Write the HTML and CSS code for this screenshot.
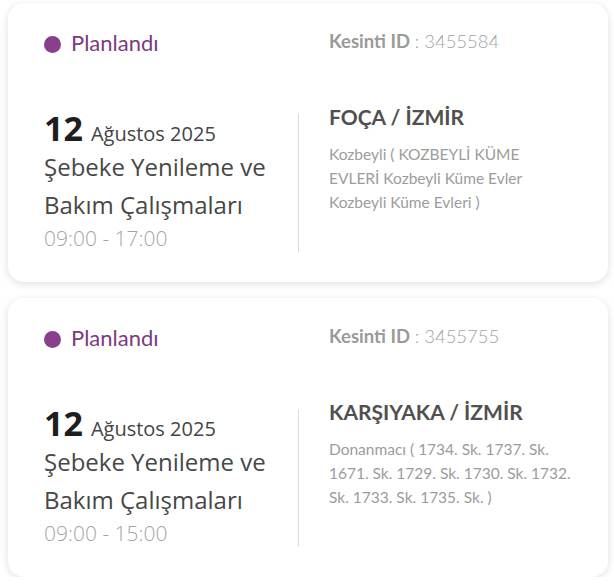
FILE: index.html
```html
<!DOCTYPE html>
<html lang="tr">
<head>
<meta charset="utf-8">
<title>Kesintiler</title>
<link rel="stylesheet" href="styles.css">
</head>
<body>
<div class="list">
  <div class="card">
    <div class="card-top">
      <div class="status"><span class="dot"></span><span class="status-text">Planlandı</span></div>
      <div class="outage-id"><span class="id-label">Kesinti ID</span> <span class="id-value">: 3455584</span></div>
    </div>
    <div class="card-body">
      <div class="info">
        <div class="date"><span class="day">12</span><span class="month">Ağustos 2025</span></div>
        <div class="title">Şebeke Yenileme ve Bakım Çalışmaları</div>
        <div class="time">09:00 - 17:00</div>
      </div>
      <div class="place">
        <div class="city">FOÇA / İZMİR</div>
        <div class="address">Kozbeyli ( KOZBEYLİ KÜME EVLERİ Kozbeyli Küme Evler Kozbeyli Küme Evleri )</div>
      </div>
    </div>
  </div>
  <div class="card">
    <div class="card-top">
      <div class="status"><span class="dot"></span><span class="status-text">Planlandı</span></div>
      <div class="outage-id"><span class="id-label">Kesinti ID</span> <span class="id-value">: 3455755</span></div>
    </div>
    <div class="card-body">
      <div class="info">
        <div class="date"><span class="day">12</span><span class="month">Ağustos 2025</span></div>
        <div class="title">Şebeke Yenileme ve Bakım Çalışmaları</div>
        <div class="time">09:00 - 15:00</div>
      </div>
      <div class="place">
        <div class="city">KARŞIYAKA / İZMİR</div>
        <div class="address">Donanmacı ( 1734. Sk. 1737. Sk. 1671. Sk. 1729. Sk. 1730. Sk. 1732. Sk. 1733. Sk. 1735. Sk. )</div>
      </div>
    </div>
  </div>
</div>
</body>
</html>
```
FILE: styles.css
```css
html, body {
  margin: 0;
  background: #ffffff;
}
body {
  padding: 3px 6px 0 8px;
}
.list {
  display: flex;
  flex-direction: column;
  gap: 16px;
}
.card {
  background: #ffffff;
  border-radius: 16px;
  box-shadow: 0 2px 9px rgba(0, 0, 0, 0.13);
  padding: 26px 20px 30px 36px;
}
.card-top {
  display: grid;
  grid-template-columns: 285px 1fr;
  align-items: start;
}
.status {
  display: flex;
  align-items: center;
  height: 28px;
}
.dot {
  width: 17px;
  height: 17px;
  border-radius: 50%;
  background: #8a3f8e;
  margin-top: 2px;
  margin-right: 10px;
}
.status-text {
  font-family: Lato, "Open Sans", sans-serif;
  font-size: 22px;
  line-height: 28px;
  color: #7b3b80;
}
.outage-id {
  font-family: Lato, "Open Sans", sans-serif;
  font-size: 18.5px;
  line-height: 24px;
  color: #a3a3a3;
}
.id-label {
  font-weight: 700;
  color: #9a9a9a;
}
.id-value {
  font-weight: 300;
}
.card-body {
  display: grid;
  grid-template-columns: 254px 1fr;
  margin-top: 57px;
}
.info {
  font-family: "Open Sans", "Noto Sans", sans-serif;
}
.date {
  line-height: 28px;
  height: 34px;
}
.day {
  font-size: 34px;
  font-weight: 700;
  color: #1e1e1e;
}
.month {
  font-size: 20px;
  line-height: 20px;
  color: #454545;
  margin-left: 8px;
}
.title {
  font-size: 24px;
  line-height: 38px;
  color: #474747;
}
.time {
  font-size: 21px;
  font-weight: 300;
  line-height: 28px;
  color: #a5a5a5;
}
.place {
  border-left: 1px solid #dddddd;
  padding-left: 30px;
  font-family: Lato, "Open Sans", sans-serif;
}
.city {
  font-size: 21px;
  font-weight: 700;
  line-height: 26px;
  color: #505050;
  margin-top: -10px;
}
.address {
  margin-top: 12px;
  font-size: 15.5px;
  line-height: 24px;
  color: #9c9c9c;
  max-width: 244px;
}
```
